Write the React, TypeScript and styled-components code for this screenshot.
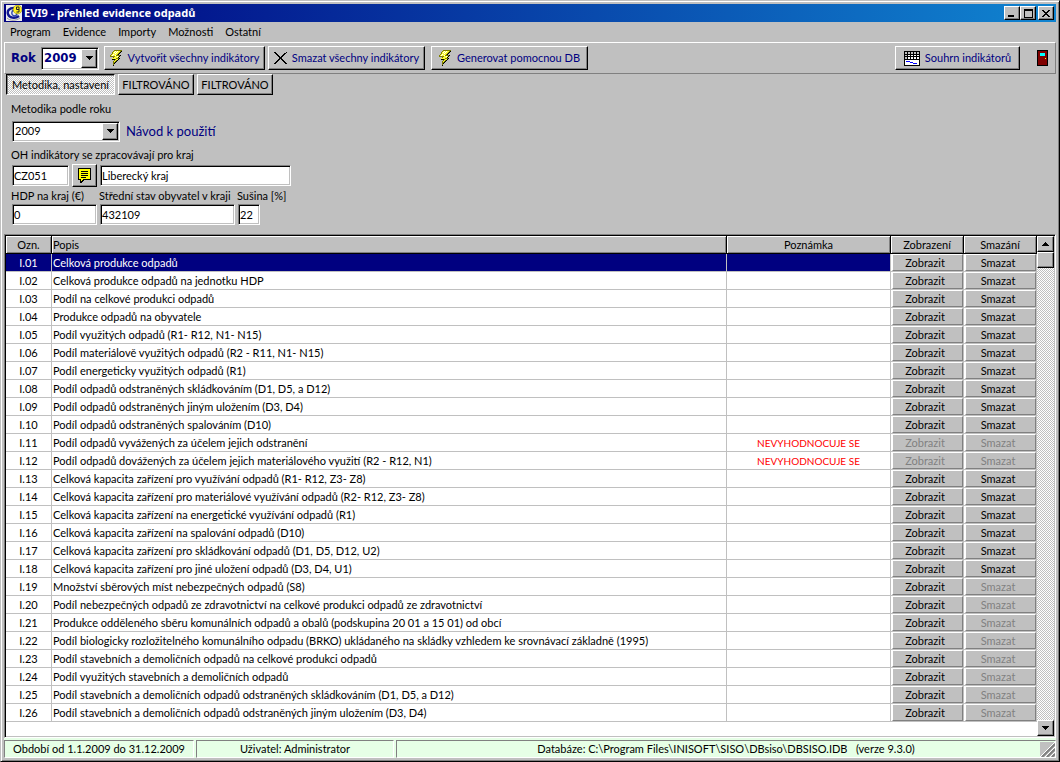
import React from "react";
import styled, { createGlobalStyle, css } from "styled-components";

const FACE = "#c0c0c0";
const NAVY = "#000080";
const SHADOW = "#808080";
const MINT = "#e6ffe6";
const FONT = 'Lato, "DejaVu Sans Condensed", sans-serif';
const BOLD_FONT = '"DejaVu Sans Condensed", "DejaVu Sans", sans-serif';

const Global = createGlobalStyle`
  *, *::before, *::after { box-sizing: border-box; }
  body { margin: 0; background: ${FACE}; color: #000; font: 11px/14px ${FONT}; }
  button, input, select { font: inherit; color: inherit; margin: 0; border-radius: 0; }
  svg { display: block; flex: none; }
`;

const raised = css`
  border: 1px solid;
  border-color: #fff #000 #000 #fff;
  box-shadow: inset -1px -1px 0 ${SHADOW};
  background: ${FACE};
`;
const sunken = css`
  border: 1px solid;
  border-color: ${SHADOW} #fff #fff ${SHADOW};
  box-shadow: inset 1px 1px 0 #000, inset -1px -1px 0 ${FACE};
  background: #fff;
`;
const dither = css`
  background: repeating-conic-gradient(${FACE} 0 25%, #fff 0 50%) 0 0 / 2px 2px;
`;

const Window = styled.div`
  min-height: 100vh;
  display: flex;
  flex-direction: column;
  padding: 3px;
  border: 1px solid;
  border-color: ${FACE} #000 #000 ${FACE};
  box-shadow: inset 1px 1px 0 #fff, inset -1px -1px 0 ${SHADOW};
`;
const TitleBar = styled.header`
  display: flex;
  align-items: center;
  height: 18px;
  padding: 0 2px;
  background: linear-gradient(90deg, ${NAVY}, #1084d0);
`;
const Title = styled.h1`
  flex: 1;
  margin: 0 0 0 2px;
  color: #fff;
  font: bold 11px/16px "Noto Sans", ${BOLD_FONT};
`;
const Caption = styled.button<{ $gap?: boolean }>`
  ${raised}
  display: grid;
  place-items: center;
  width: 16px;
  height: 14px;
  padding: 0;
  margin-left: ${(p) => (p.$gap ? 2 : 0)}px;
`;
const MenuBar = styled.nav`
  display: flex;
  gap: 12px;
  height: 20px;
  padding: 0 6px;
`;
const MenuItem = styled.button`
  padding: 0;
  border: 0;
  background: none;
`;
const Toolbar = styled.div`
  display: flex;
  align-items: center;
  height: 32px;
  padding: 0 7px 0 6px;
  border: 1px solid;
  border-color: #fff ${SHADOW} ${SHADOW} #fff;
`;
const YearLabel = styled.label`
  width: 30px;
  color: ${NAVY};
  font: bold 13px/16px ${BOLD_FONT};
`;
const Picker = styled.span<{ $w: number; $big?: boolean }>`
  ${sunken}
  display: flex;
  align-items: center;
  position: relative;
  width: ${(p) => p.$w}px;
  height: ${(p) => (p.$big ? 23 : 21)}px;
  padding: 1px;
  color: ${(p) => (p.$big ? NAVY : "#000")};
  font: ${(p) => (p.$big ? `bold 13px/18px ${BOLD_FONT}` : "inherit")};
  select {
    appearance: none;
    width: 100%;
    height: 100%;
    padding: 0 15px 0 1px;
    border: 0;
    outline: 0;
    background: transparent;
  }
`;
const DropArrow = styled.span`
  ${raised}
  position: absolute;
  top: 1px;
  right: 1px;
  bottom: 1px;
  width: 16px;
  display: grid;
  place-items: center;
  pointer-events: none;
`;
const ToolButton = styled.button<{ $w: number; $before: number }>`
  ${raised}
  display: flex;
  align-items: center;
  justify-content: center;
  gap: 5px;
  width: ${(p) => p.$w}px;
  height: 24px;
  padding: 0;
  margin-left: ${(p) => p.$before}px;
  color: ${NAVY};
  white-space: nowrap;
`;
const Spring = styled.div`
  flex: 1;
`;
const ExitButton = styled.button`
  padding: 0;
  margin-left: 17px;
  border: 0;
  background: none;
`;
const Tabs = styled.div`
  display: flex;
  gap: 3px;
  padding-left: 2px;
`;
const Tab = styled.button<{ $w: number; $active?: boolean }>`
  ${raised}
  width: ${(p) => p.$w}px;
  height: 21px;
  padding: 0;
  white-space: nowrap;
  ${(p) =>
    p.$active &&
    css`
      ${dither}
      border-color: #000 #fff #fff #000;
      box-shadow: inset 1px 1px 0 ${SHADOW};
    `}
`;
const Form = styled.form`
  padding: 6px 8px 9px 7px;
`;
const FormRow = styled.div<{ $h: number; $gap?: number; $indent?: boolean }>`
  display: flex;
  align-items: center;
  gap: ${(p) => p.$gap ?? 3}px;
  height: ${(p) => p.$h}px;
  padding-left: ${(p) => (p.$indent ? 1 : 0)}px;
  white-space: nowrap;
`;
const Label = styled.label<{ $w?: number }>`
  width: ${(p) => (p.$w ? `${p.$w}px` : "auto")};
`;
const Help = styled.a`
  color: ${NAVY};
  font-size: 13px;
  text-decoration: none;
`;
const Field = styled.input<{ $w: number }>`
  ${sunken}
  width: ${(p) => p.$w}px;
  height: 21px;
  padding: 0 1px;
  outline: 0;
`;
const NoteButton = styled.button`
  ${raised}
  display: grid;
  place-items: center;
  width: 25px;
  height: 23px;
  padding: 0;
`;
const Grid = styled.main`
  ${sunken}
  flex: 1;
  display: flex;
  padding: 1px;
`;
const Table = styled.table`
  flex: 1;
  width: 0;
  align-self: flex-start;
  table-layout: fixed;
  border-collapse: separate;
  border-spacing: 0;
`;
const Col = styled.col<{ $w?: number }>`
  width: ${(p) => (p.$w ? `${p.$w}px` : "auto")};
`;
const Head = styled.th<{ $left?: boolean }>`
  height: 18px;
  padding: 0 1px;
  border: 0 solid #000;
  border-width: 0 1px 1px 0;
  background: ${FACE};
  box-shadow: inset 1px 1px 0 #fff, inset -1px -1px 0 ${SHADOW};
  font-weight: normal;
  line-height: 14px;
  text-align: ${(p) => (p.$left ? "left" : "center")};
`;
const Cell = styled.td<{ $center?: boolean; $note?: boolean; $button?: boolean }>`
  height: 18px;
  padding: ${(p) => (p.$button ? "0 0 0 1px" : "0 1px")};
  border: 0 solid ${FACE};
  border-width: 0 1px 1px 0;
  font-size: ${(p) => (p.$note ? 10 : 11)}px;
  line-height: 14px;
  white-space: nowrap;
  overflow: hidden;
  text-align: ${(p) => (p.$center ? "center" : "left")};
  color: ${(p) => (p.$note ? "#f00" : "inherit")};
`;
const Row = styled.tr<{ $selected: boolean }>`
  background: #fff;
  ${(p) =>
    p.$selected &&
    css`
      ${Cell}:nth-child(-n + 3) {
        background: ${NAVY};
        color: #fff;
      }
    `}
`;
const CellButton = styled.button`
  display: block;
  width: 100%;
  height: 17px;
  padding: 0 5px 0 0;
  border: 1px solid;
  border-color: #fff ${SHADOW} ${SHADOW} #fff;
  background: ${FACE};
  line-height: 14px;
  &:disabled {
    color: ${SHADOW};
  }
`;
const Scroll = styled.div`
  ${dither}
  display: flex;
  flex-direction: column;
  width: 17px;
`;
const ScrollButton = styled.button`
  ${raised}
  display: grid;
  place-items: center;
  height: 16px;
  padding: 0;
`;
const Thumb = styled.div`
  ${raised}
  height: 16px;
`;
const Status = styled.footer`
  display: flex;
  gap: 2px;
  padding-top: 2px;
  background: ${MINT};
`;
const Panel = styled.div<{ $w?: number }>`
  flex: ${(p) => (p.$w ? `0 0 ${p.$w}px` : "1")};
  position: relative;
  height: 18px;
  border: 1px solid;
  border-color: ${SHADOW} #fff #fff ${SHADOW};
  line-height: 16px;
  text-align: center;
  white-space: pre;
`;
const Grip = styled.svg`
  position: absolute;
  right: 0;
  bottom: 0;
  background: ${FACE};
`;

const Arrow = ({ up }: { up?: boolean }) => (
  <svg width="7" height="4" shapeRendering="crispEdges">
    <path d={up ? "M3 0h1v1h1v1h1v1h1v1H0V3h1V2h1V1h1z" : "M0 0h7v1H6v1H5v1H4v1H3V3H2V2H1V1H0z"} />
  </svg>
);

const Logo = () => (
  <svg width="16" height="16" viewBox="0 0 16 16">
    <rect width="16" height="16" fill="#eee" />
    <path d="M8 3C3 3 1 6 2 9c1 4 7 5 11 2" fill="none" stroke="#101890" strokeWidth="2.4" />
    <path d="M8 5c-3 1-3 5 0 6 2 0 3-1 3-3" fill="none" stroke="#3048b0" strokeWidth="1.4" />
    <path d="M1 13c3 3 9 3 13 0" fill="none" stroke="#999" />
    <circle cx="11.5" cy="4.5" r="4.4" fill="#ffee20" stroke="#777700" strokeWidth=".5" />
    <path d="M13 4.5h-2.5V2H13v5h-2.5" fill="none" stroke="#222" strokeWidth="1" />
  </svg>
);

const Bolt = () => (
  <svg width="13" height="16" viewBox="0 0 13 16" shapeRendering="crispEdges">
    <path d="M11 1h1v1h-1v1h-1v1H9v1h2v1h-1v1H9v1h1v1H9v1H8v1H7v1H6v1H5v1H4v2H3v-4h1v-1h1v-1H2V9h1V8h1V7H2V6h1V5h1z" fill="#000" />
    <path d="M4 0h8v1h-1v1h-1v1H9v1H8v1h2v1H9v1H8v1h1v1H8v1H7v1H6v1H5v1H4v2H3v-4h1v-1h1v-1H1V9h1V8h1V7H0V5h1V4h1V2h1V1h1z" fill="#808000" />
    <path d="M4 1h6v1H9v1H8v1H7v1H6v1h3v1H8v1H6v1h2v1H6v1H5v1H4v-1h1v-1h1V9H2V8h2V7h1V6H1V5h1V4h1V2h1z" fill="#ffff30" />
    <path d="M5 1h1v1H5zM7 1h1v1H7zM4 2h1v1H4zM6 2h1v1H6zM5 3h1v1H5zM3 4h1v1H3zM2 5h1v1H2zM5 5h1v1H5zM7 6h1v1H7z" fill="#fff" />
  </svg>
);

const Cross = () => (
  <svg width="13" height="12" viewBox="0 0 13 12" shapeRendering="crispEdges">
    <path
      d="M0 0h2v1h1v1h1v1h1v1h1v1h1V4h1V3h1V2h1V1h2V0h1v1h-1v1h-1v1h-1v1H9v1H8v2h1v1h1v1h1v1h1v1h1v1h-2v-1h-1v-1H9V9H8V8H7V7H6v1H5v1H4v1H3v1H2v1H0v-1h1v-1h1V9h1V8h1V7h1V5H4V4H3V3H2V2H1V1H0z"
      fill="#000"
    />
  </svg>
);

const Sheet = () => (
  <svg width="16" height="15" viewBox="0 0 16 15" shapeRendering="crispEdges">
    <rect width="16" height="15" fill="#000" />
    <path d="M1 1h2v2H1zM4 1h2v2H4zM7 1h2v2H7zM10 1h2v2h-2zM13 1h2v2h-2z" fill="#c0c0c0" />
    <path d="M1 4h2v1H1zM1 6h2v2H1z" fill="#c0c0c0" />
    <path d="M4 4h2v1H4zM7 4h2v1H7zM10 4h2v1h-2zM13 4h2v1h-2zM4 6h2v2H4zM7 6h2v2H7zM10 6h2v2h-2zM13 6h2v2h-2zM1 9h14v5H1z" fill="#fff" />
    <path d="M2 10h4v1H2zM6 11h3v1H6zM9 12h4v1H9z" fill="#0000ff" />
  </svg>
);

const Door = () => (
  <svg width="11" height="16" viewBox="0 0 11 16" shapeRendering="crispEdges">
    <rect width="11" height="16" fill="#000" />
    <rect x="1" y="1" width="9" height="14" fill="#800000" />
    <rect x="3" y="3" width="5" height="3" fill="#00ffff" />
    <rect x="8" y="8" width="1" height="1" fill="#ffff00" />
  </svg>
);

const Note = () => (
  <svg width="13" height="15" viewBox="0 0 13 15" shapeRendering="crispEdges">
    <path d="M0 0h13v12H6v1H5v1H4v1H2v-3H0z" fill="#000" />
    <path d="M1 1h11v10H5v1H4v1H3v-2H1z" fill="#ffff00" />
    <path d="M3 3h7v1H3zM3 5h7v1H3zM3 7h7v1H3zM3 9h5v1H3z" fill="#000" />
  </svg>
);

const indicators = [
  "Celková produkce odpadů",
  "Celková produkce odpadů na jednotku HDP",
  "Podíl na celkové produkci odpadů",
  "Produkce odpadů na obyvatele",
  "Podíl využitých odpadů (R1- R12, N1- N15)",
  "Podíl materiálově využitých odpadů (R2 - R11, N1- N15)",
  "Podíl energeticky využitých odpadů (R1)",
  "Podíl odpadů odstraněných skládkováním (D1, D5, a D12)",
  "Podíl odpadů odstraněných jiným uložením (D3, D4)",
  "Podíl odpadů odstraněných spalováním (D10)",
  "Podíl odpadů vyvážených za účelem jejich odstranění",
  "Podíl odpadů dovážených za účelem jejich materiálového využití (R2 - R12, N1)",
  "Celková kapacita zařízení pro využívání odpadů (R1- R12, Z3- Z8)",
  "Celková kapacita zařízení pro materiálové využívání odpadů (R2- R12, Z3- Z8)",
  "Celková kapacita zařízení na energetické využívání odpadů (R1)",
  "Celková kapacita zařízení na spalování odpadů (D10)",
  "Celková kapacita zařízení pro skládkování odpadů (D1, D5, D12, U2)",
  "Celková kapacita zařízení pro jiné uložení odpadů (D3, D4, U1)",
  "Množství sběrových míst nebezpečných odpadů (S8)",
  "Podíl nebezpečných odpadů ze zdravotnictví na celkové produkci odpadů ze zdravotnictví",
  "Produkce odděleného sběru komunálních odpadů a obalů (podskupina 20 01 a 15 01) od obcí",
  "Podíl biologicky rozložitelného komunálního odpadu (BRKO) ukládaného na skládky vzhledem ke srovnávací základně (1995)",
  "Podíl stavebních a demoličních odpadů na celkové produkci odpadů",
  "Podíl využitých stavebních a demoličních odpadů",
  "Podíl stavebních a demoličních odpadů odstraněných skládkováním (D1, D5, a D12)",
  "Podíl stavebních a demoličních odpadů odstraněných jiným uložením (D3, D4)",
];

export default function App() {
  return (
    <>
      <Global />
      <Window>
        <TitleBar>
          <Logo />
          <Title>EVI9 - přehled evidence odpadů</Title>
          <Caption aria-label="Minimalizovat">
            <svg width="8" height="8" shapeRendering="crispEdges">
              <path d="M0 6h6v2H0z" />
            </svg>
          </Caption>
          <Caption aria-label="Maximalizovat">
            <svg width="9" height="9" shapeRendering="crispEdges">
              <path d="M0 0h9v9H0zM1 2v6h7V2z" fillRule="evenodd" />
            </svg>
          </Caption>
          <Caption $gap aria-label="Zavřít">
            <svg width="8" height="7" shapeRendering="crispEdges">
              <path d="M0 0h2v1h1v1h2V1h1V0h2v1H7v1H6v1H5v1h1v1h1v1h1v1H6V6H5V5H3v1H2v1H0V6h1V5h1V4h1V3H2V2H1V1H0z" />
            </svg>
          </Caption>
        </TitleBar>
        <MenuBar>
          {["Program", "Evidence", "Importy", "Možnosti", "Ostatní"].map((m) => (
            <MenuItem key={m}>{m}</MenuItem>
          ))}
        </MenuBar>
        <Toolbar>
          <YearLabel htmlFor="rok">Rok</YearLabel>
          <Picker $w={58} $big>
            <select id="rok" defaultValue="2009">
              <option>2009</option>
            </select>
            <DropArrow><Arrow /></DropArrow>
          </Picker>
          <ToolButton $w={161} $before={5}><Bolt />Vytvořit všechny indikátory</ToolButton>
          <ToolButton $w={157} $before={3}><Cross />Smazat všechny indikátory</ToolButton>
          <ToolButton $w={157} $before={6}><Bolt />Generovat pomocnou DB</ToolButton>
          <Spring />
          <ToolButton $w={125} $before={6}><Sheet />Souhrn indikátorů</ToolButton>
          <ExitButton aria-label="Konec"><Door /></ExitButton>
        </Toolbar>
        <Tabs>
          <Tab $w={109} $active>Metodika, nastavení</Tab>
          <Tab $w={76}>FILTROVÁNO</Tab>
          <Tab $w={76}>FILTROVÁNO</Tab>
        </Tabs>
        <Form onSubmit={(e) => e.preventDefault()}>
          <FormRow $h={15}>
            <Label htmlFor="metodika">Metodika podle roku</Label>
          </FormRow>
          <FormRow $h={30} $gap={6} $indent>
            <Picker $w={108}>
              <select id="metodika" defaultValue="2009">
                <option>2009</option>
              </select>
              <DropArrow><Arrow /></DropArrow>
            </Picker>
            <Help href="#navod">Návod k použití</Help>
          </FormRow>
          <FormRow $h={18}>
            <Label htmlFor="kraj">OH indikátory se zpracovávají pro kraj</Label>
          </FormRow>
          <FormRow $h={23} $indent>
            <Field id="kraj" $w={57} defaultValue="CZ051" />
            <NoteButton type="button" aria-label="Vybrat kraj"><Note /></NoteButton>
            <Field $w={191} defaultValue="Liberecký kraj" aria-label="Název kraje" />
          </FormRow>
          <FormRow $h={17}>
            <Label $w={85} htmlFor="hdp">HDP na kraj (€)</Label>
            <Label $w={135} htmlFor="stav">Střední stav obyvatel v kraji</Label>
            <Label htmlFor="susina">Sušina [%]</Label>
          </FormRow>
          <FormRow $h={21} $indent>
            <Field id="hdp" $w={85} defaultValue="0" />
            <Field id="stav" $w={135} defaultValue="432109" />
            <Field id="susina" $w={22} defaultValue="22" />
          </FormRow>
        </Form>
        <Grid>
          <Table>
            <colgroup>
              <Col $w={46} />
              <Col />
              <Col $w={164} />
              <Col $w={73} />
              <Col $w={73} />
            </colgroup>
            <thead>
              <tr>
                <Head>Ozn.</Head>
                <Head $left>Popis</Head>
                <Head>Poznámka</Head>
                <Head>Zobrazení</Head>
                <Head>Smazání</Head>
              </tr>
            </thead>
            <tbody>
              {indicators.map((name, i) => {
                const n = i + 1;
                const skipped = n === 11 || n === 12;
                return (
                  <Row key={n} $selected={n === 1}>
                    <Cell $center>I.{String(n).padStart(2, "0")}</Cell>
                    <Cell>{name}</Cell>
                    <Cell $center $note>{skipped ? "NEVYHODNOCUJE SE" : ""}</Cell>
                    <Cell $button><CellButton disabled={skipped}>Zobrazit</CellButton></Cell>
                    <Cell $button><CellButton disabled={skipped || n >= 19}>Smazat</CellButton></Cell>
                  </Row>
                );
              })}
            </tbody>
          </Table>
          <Scroll>
            <ScrollButton aria-label="Nahoru"><Arrow up /></ScrollButton>
            <Thumb />
            <Spring />
            <ScrollButton aria-label="Dolů"><Arrow /></ScrollButton>
          </Scroll>
        </Grid>
        <Status>
          <Panel $w={190}>Období od 1.1.2009 do 31.12.2009</Panel>
          <Panel $w={198}>Uživatel: Administrator</Panel>
          <Panel>
            {"Databáze: C:\\Program Files\\INISOFT\\SISO\\DBsiso\\DBSISO.IDB   (verze 9.3.0)"}
            <Grip width="15" height="15" viewBox="0 0 15 15">
              <path d="M2 15 15 2M7 15l8-8M12 15l3-3" stroke="#808080" strokeWidth="2" />
              <path d="M0 15 15 0M5 15 15 5M10 15l5-5" stroke="#fff" />
            </Grip>
          </Panel>
        </Status>
      </Window>
    </>
  );
}
